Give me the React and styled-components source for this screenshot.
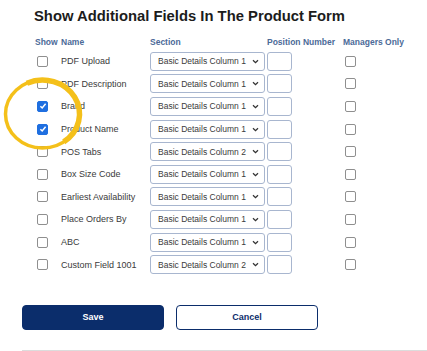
import React from "react";
import styled, { createGlobalStyle } from "styled-components";

const GlobalStyle = createGlobalStyle`
	body {
		margin: 0;
		background: #fff;
		font-family: "Liberation Sans", Arial, sans-serif;
	}
`;

const Page = styled.div`
	position: relative;
	width: 427px;
	height: 351px;
	padding: 7px 0 0 22px;
	box-sizing: border-box;
	overflow: hidden;
`;

const Title = styled.h1`
	margin: 0 0 10px 12px;
	font-size: 14.8px;
	line-height: 18px;
	font-weight: 700;
	color: #1c1c1c;
`;

const Grid = styled.div`
	margin-left: 13px;
	display: grid;
	grid-template-columns: 26px 89px 117px 76px auto;
	grid-template-rows: 15px;
	grid-auto-rows: 22.6px;
	align-items: center;
`;

const Head = styled.div`
	font-size: 8.5px;
	font-weight: 700;
	color: #4c6a98;
	white-space: nowrap;
	align-self: start;
	line-height: 15px;
`;

const Box = styled.span`
	display: flex;
	align-items: center;
	justify-content: center;
	margin-left: 2px;
	width: 11px;
	height: 11px;
	box-sizing: border-box;
	border-radius: 2px;
	border: 1px solid ${p => (p.checked ? "#1f6fe0" : "#8f8f8f")};
	background: ${p => (p.checked ? "#1f6fe0" : "#fff")};
`;

const Name = styled.div`
	font-size: 9px;
	color: #3a3a3a;
	white-space: nowrap;
`;

const Select = styled.div`
	display: flex;
	align-items: center;
	justify-content: space-between;
	width: 115px;
	height: 19px;
	box-sizing: border-box;
	padding: 0 5px 0 7px;
	border: 1px solid #a8b6cf;
	border-radius: 3px;
	font-size: 8.5px;
	color: #3a3a3a;
	white-space: nowrap;
`;

const Input = styled.div`
	width: 25px;
	height: 19px;
	box-sizing: border-box;
	border: 1px solid #a8b6cf;
	border-radius: 3px;
`;

const Buttons = styled.div`
	display: flex;
	gap: 12px;
	margin-top: 29px;
`;

const Button = styled.button`
	width: 142px;
	height: 25px;
	border-radius: 4px;
	font-family: "Liberation Sans", Arial, sans-serif;
	font-size: 9px;
	font-weight: 700;
	cursor: pointer;
	border: 1.5px solid #0b2d6b;
	background: ${p => (p.primary ? "#0b2d6b" : "#fff")};
	color: ${p => (p.primary ? "#fff" : "#0b2d6b")};
`;

const Rule = styled.div`
	margin-top: 20px;
	height: 1px;
	background: #dcdcdc;
`;

// hand-drawn highlight ring over the Brand / Product Name rows
const Ring = styled.svg`
	position: absolute;
	left: 0;
	top: 74px;
	pointer-events: none;
`;

const Chevron = () => (
	<svg width="7" height="5" viewBox="0 0 7 5">
		<path d="M1 1.2 L3.5 3.6 L6 1.2" fill="none" stroke="#333" strokeWidth="1.3" />
	</svg>
);

const Check = () => (
	<svg width="8" height="8" viewBox="0 0 8 8">
		<path d="M1.4 4.2 L3.2 6 L6.6 1.8" fill="none" stroke="#fff" strokeWidth="1.5" />
	</svg>
);

const rows = [
	["PDF Upload", 1, false],
	["PDF Description", 1, false],
	["Brand", 1, true],
	["Product Name", 1, true],
	["POS Tabs", 2, false],
	["Box Size Code", 1, false],
	["Earliest Availability", 1, false],
	["Place Orders By", 1, false],
	["ABC", 1, false],
	["Custom Field 1001", 2, false],
];

export default function App() {
	return (
		<Page>
			<GlobalStyle />
			<Title>Show Additional Fields In The Product Form</Title>
			<Grid>
				<Head>Show</Head>
				<Head>Name</Head>
				<Head>Section</Head>
				<Head>Position Number</Head>
				<Head>Managers Only</Head>
				{rows.map(([name, col, on]) => (
					<React.Fragment key={name}>
						<Box checked={on}>{on && <Check />}</Box>
						<Name>{name}</Name>
						<Select>
							Basic Details Column {col}
							<Chevron />
						</Select>
						<Input />
						<Box />
					</React.Fragment>
				))}
			</Grid>
			<Buttons>
				<Button primary>Save</Button>
				<Button>Cancel</Button>
			</Buttons>
			<Rule />
			<Ring width="90" height="82">
				<ellipse cx="42.5" cy="40" rx="37" ry="34" fill="none" stroke="#f4c01a" strokeWidth="3.5" />
				<path
					d="M26.9 9.2 A37 34 0 0 1 63.7 67.9"
					fill="none"
					stroke="#f4c01a"
					strokeWidth="5.5"
				/>
			</Ring>
		</Page>
	);
}
